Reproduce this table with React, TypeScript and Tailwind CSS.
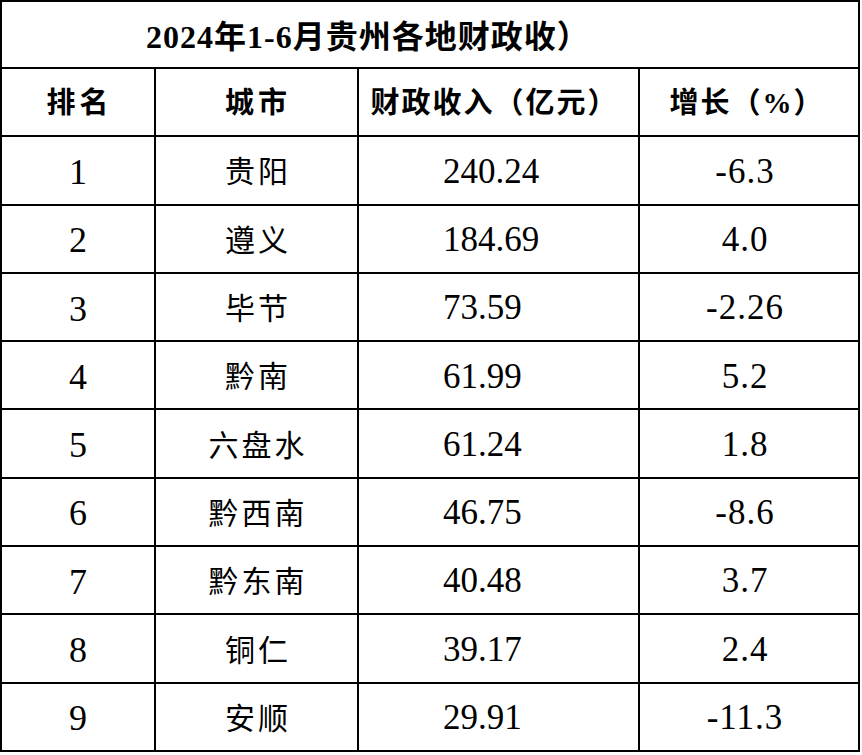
const rows = [
  { rank: '1', city: '贵阳', revenue: '240.24', growth: '-6.3' },
  { rank: '2', city: '遵义', revenue: '184.69', growth: '4.0' },
  { rank: '3', city: '毕节', revenue: '73.59', growth: '-2.26' },
  { rank: '4', city: '黔南', revenue: '61.99', growth: '5.2' },
  { rank: '5', city: '六盘水', revenue: '61.24', growth: '1.8' },
  { rank: '6', city: '黔西南', revenue: '46.75', growth: '-8.6' },
  { rank: '7', city: '黔东南', revenue: '40.48', growth: '3.7' },
  { rank: '8', city: '铜仁', revenue: '39.17', growth: '2.4' },
  { rank: '9', city: '安顺', revenue: '29.91', growth: '-11.3' },
];

const font = 'font-["Liberation_Serif","Noto_Sans_CJK_SC",serif]';
const grid = 'grid grid-cols-[154px_203px_281px_218px] border-x-2 border-b-2 border-black';

export default function App() {
  return (
    <div className={`w-[862px] h-[755px] bg-white text-black ${font}`}>
      <div className="w-[860px]">
        {/* title */}
        <div className="h-[69px] flex items-center pl-[144px] pt-[5px] border-2 border-black text-[32px] font-bold tracking-[1px]">
          2024年1-6月贵州各地财政收）
        </div>

        {/* header */}
        <div className={`${grid} h-[68.3px] text-[29px] font-bold`}>
          <div className="flex items-center justify-center pt-[4px] border-r-2 border-black tracking-[4px] pl-[3px]">排名</div>
          <div className="flex items-center justify-center pt-[4px] border-r-2 border-black tracking-[4px] pl-[3px]">城市</div>
          <div className="flex items-center justify-center pt-[4px] border-r-2 border-black tracking-[2px] pr-[8px]">财政收入（亿元）</div>
          <div className="flex items-center justify-center pt-[4px] pr-[4px] tracking-[2px]">增长（%）</div>
        </div>

        {rows.map((r) => (
          <div key={r.rank} className={`${grid} h-[68.3px]`}>
            <div className="flex items-center justify-center pt-[3px] border-r-2 border-black text-[36px]">{r.rank}</div>
            <div className="flex items-center justify-center pt-[3px] border-r-2 border-black text-[30px] tracking-[3px] pl-[3px]">
              {r.city}
            </div>
            <div className="flex items-center pt-[3px] pl-[84px] border-r-2 border-black text-[35px]">{r.revenue}</div>
            <div className="flex items-center justify-center pt-[3px] pr-[8px] text-[35px] tracking-[1px]">{r.growth}</div>
          </div>
        ))}
      </div>
    </div>
  );
}
